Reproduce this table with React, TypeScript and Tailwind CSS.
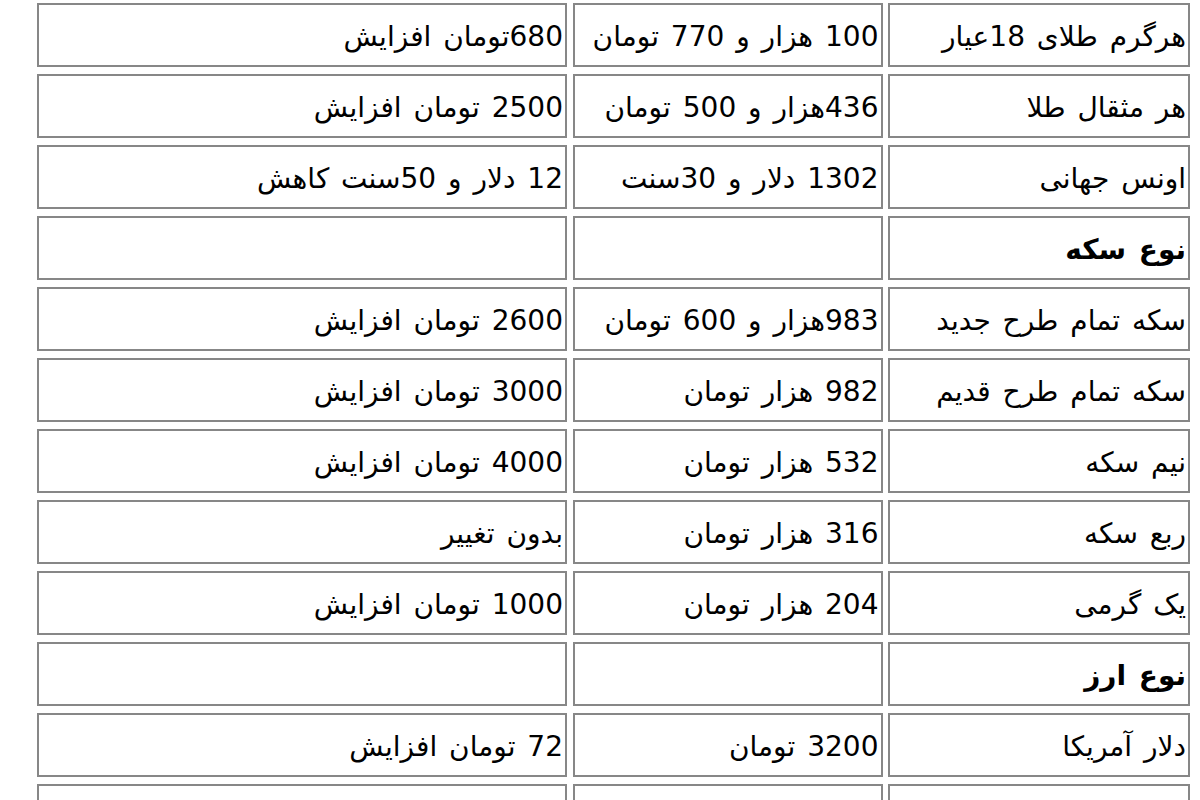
type Row = { name: string; price: string; change: string; bold?: boolean };

const ROWS: Row[] = [
  { name: 'هرگرم طلای 18عیار', price: '100 هزار و 770 تومان', change: '680تومان افزایش' },
  { name: 'هر مثقال طلا', price: '436هزار و 500 تومان', change: '2500 تومان افزایش' },
  { name: 'اونس جهانی', price: '1302 دلار و 30سنت', change: '12 دلار و 50سنت کاهش' },
  { name: 'نوع سکه', price: '', change: '', bold: true },
  { name: 'سکه تمام طرح جدید', price: '983هزار و 600 تومان', change: '2600 تومان افزایش' },
  { name: 'سکه تمام طرح قدیم', price: '982 هزار تومان', change: '3000 تومان افزایش' },
  { name: 'نیم سکه', price: '532 هزار تومان', change: '4000 تومان افزایش' },
  { name: 'ربع سکه', price: '316 هزار تومان', change: 'بدون تغییر' },
  { name: 'یک گرمی', price: '204 هزار تومان', change: '1000 تومان افزایش' },
  { name: 'نوع ارز', price: '', change: '', bold: true },
  { name: 'دلار آمریکا', price: '3200 تومان', change: '72 تومان افزایش' },
  { name: '', price: '', change: '' },
];

function Cell({ text, bold }: { text: string; bold?: boolean }) {
  return (
    <div
      className={`flex h-[64px] items-center border-2 border-[#878787] bg-white pt-[3px] pr-[2px] pl-1 whitespace-nowrap overflow-hidden ${
        bold ? 'font-bold' : ''
      }`}
    >
      {text}
    </div>
  );
}

export default function App() {
  return (
    <div
      dir="rtl"
      className="min-h-screen w-[1200px] bg-white pt-[3px] pr-[10px] text-[28px] leading-none text-black [word-spacing:3px]"
      style={{ fontFamily: '"DejaVu Sans", "Noto Sans", sans-serif' }}
    >
      <div className="grid grid-cols-[302px_310px_530px] gap-x-[5.5px] gap-y-[7px]">
        {ROWS.map((row, i) => (
          <div key={i} className="contents">
            <Cell text={row.name} bold={row.bold} />
            <Cell text={row.price} />
            <Cell text={row.change} />
          </div>
        ))}
      </div>
    </div>
  );
}
